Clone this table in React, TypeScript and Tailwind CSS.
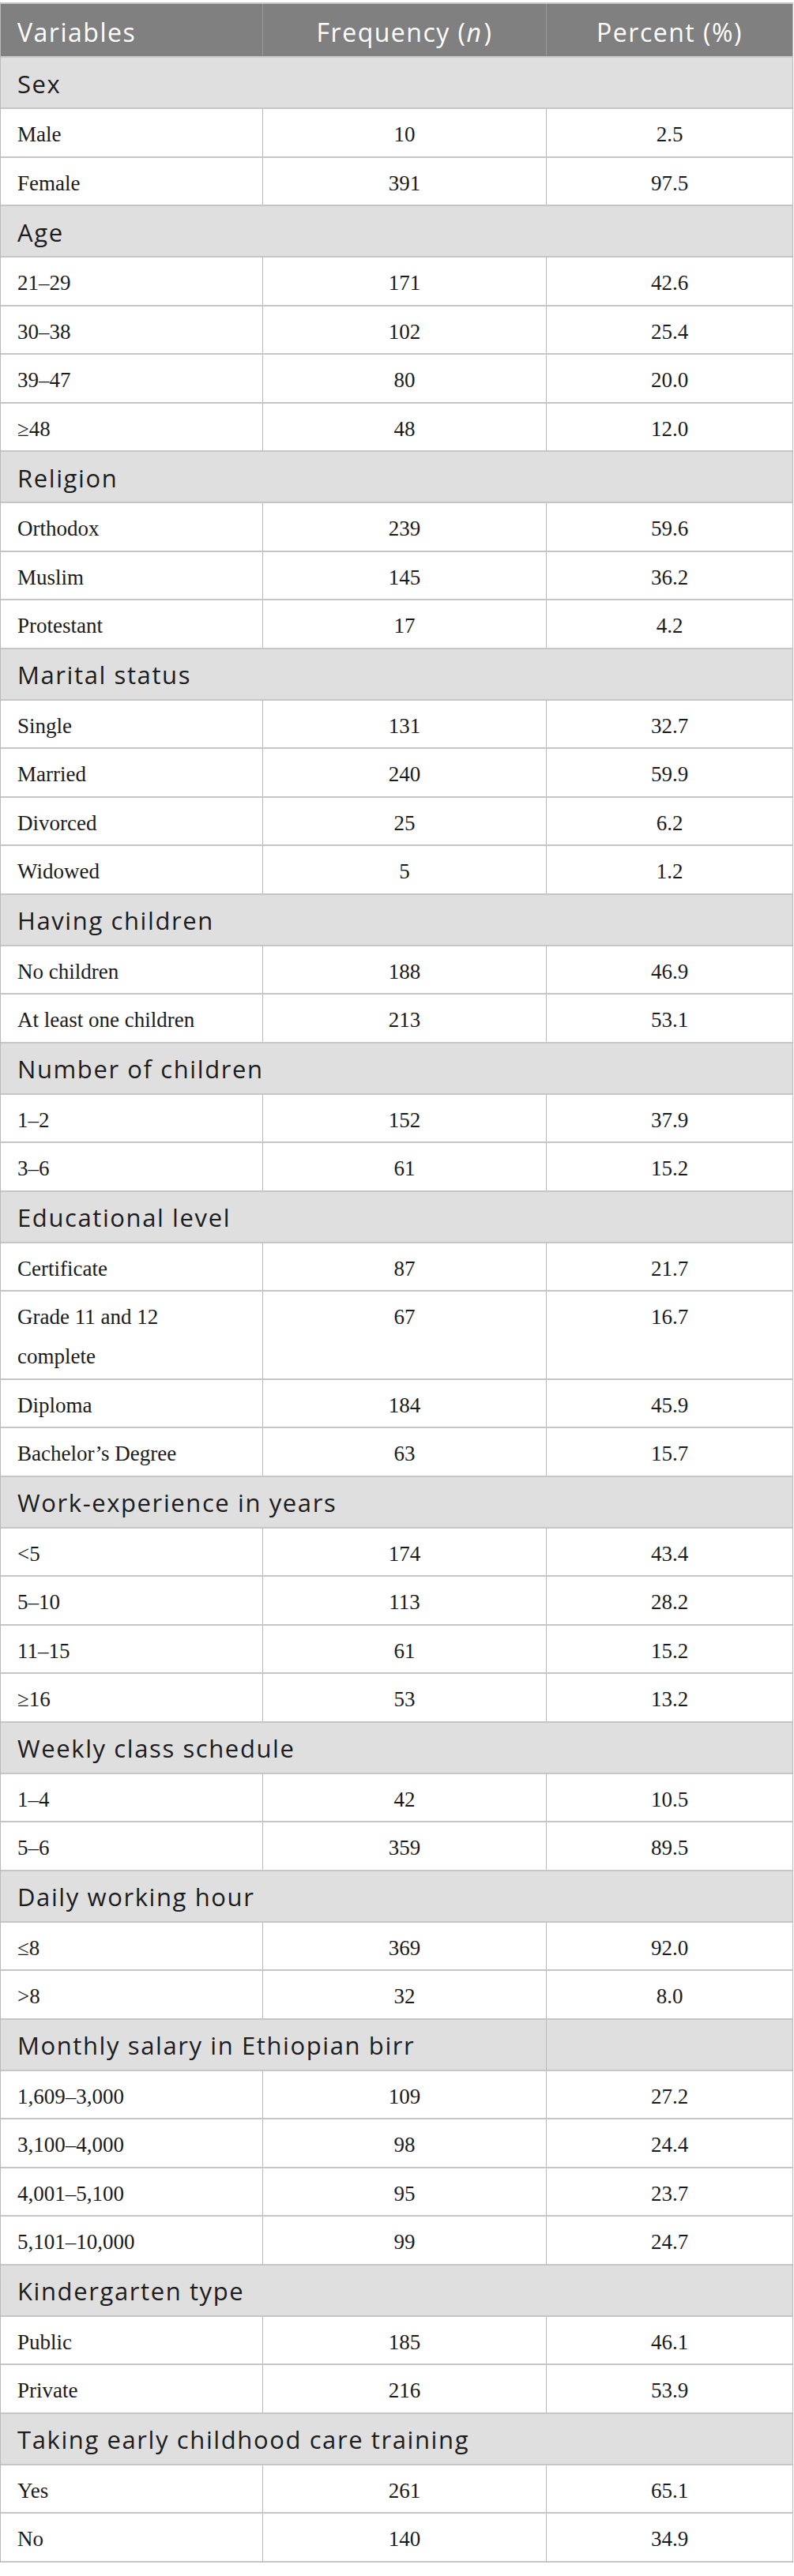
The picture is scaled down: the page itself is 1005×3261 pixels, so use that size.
import React from "react";

type Group = {
  title: string;
  splitLast?: boolean;
  rows: [string, string, string][];
};

const groups: Group[] = [
  { title: "Sex", rows: [["Male", "10", "2.5"], ["Female", "391", "97.5"]] },
  {
    title: "Age",
    rows: [
      ["21–29", "171", "42.6"],
      ["30–38", "102", "25.4"],
      ["39–47", "80", "20.0"],
      ["≥48", "48", "12.0"],
    ],
  },
  {
    title: "Religion",
    rows: [
      ["Orthodox", "239", "59.6"],
      ["Muslim", "145", "36.2"],
      ["Protestant", "17", "4.2"],
    ],
  },
  {
    title: "Marital status",
    rows: [
      ["Single", "131", "32.7"],
      ["Married", "240", "59.9"],
      ["Divorced", "25", "6.2"],
      ["Widowed", "5", "1.2"],
    ],
  },
  {
    title: "Having children",
    rows: [
      ["No children", "188", "46.9"],
      ["At least one children", "213", "53.1"],
    ],
  },
  {
    title: "Number of children",
    rows: [
      ["1–2", "152", "37.9"],
      ["3–6", "61", "15.2"],
    ],
  },
  {
    title: "Educational level",
    rows: [
      ["Certificate", "87", "21.7"],
      ["Grade 11 and 12 complete", "67", "16.7"],
      ["Diploma", "184", "45.9"],
      ["Bachelor’s Degree", "63", "15.7"],
    ],
  },
  {
    title: "Work-experience in years",
    rows: [
      ["<5", "174", "43.4"],
      ["5–10", "113", "28.2"],
      ["11–15", "61", "15.2"],
      ["≥16", "53", "13.2"],
    ],
  },
  {
    title: "Weekly class schedule",
    rows: [
      ["1–4", "42", "10.5"],
      ["5–6", "359", "89.5"],
    ],
  },
  {
    title: "Daily working hour",
    rows: [
      ["≤8", "369", "92.0"],
      [">8", "32", "8.0"],
    ],
  },
  {
    title: "Monthly salary in Ethiopian birr",
    splitLast: true,
    rows: [
      ["1,609–3,000", "109", "27.2"],
      ["3,100–4,000", "98", "24.4"],
      ["4,001–5,100", "95", "23.7"],
      ["5,101–10,000", "99", "24.7"],
    ],
  },
  {
    title: "Kindergarten type",
    rows: [
      ["Public", "185", "46.1"],
      ["Private", "216", "53.9"],
    ],
  },
  {
    title: "Taking early childhood care training",
    rows: [
      ["Yes", "261", "65.1"],
      ["No", "140", "34.9"],
    ],
  },
];

const sans = "font-['Open_Sans',sans-serif]";
const serif = "font-['Liberation_Serif',serif]";

function GroupRow({ g }: { g: Group }) {
  return (
    <div className="flex h-[65px] border-b-2 border-[#c6c6c6] bg-[#e0dfe0] text-[#1c1c1c]">
      <div
        className={`${sans} flex items-center pt-[3px] pl-[21px] text-[31px] tracking-[1.6px] ${
          g.splitLast ? "w-[691px] border-r border-[#b9b9b9]" : "flex-1"
        }`}
      >
        {g.title}
      </div>
      {g.splitLast && <div className="flex-1" />}
    </div>
  );
}

function DataRow({ row }: { row: [string, string, string] }) {
  const [label, n, pct] = row;
  return (
    <div className={`${serif} flex border-b-2 border-[#c6c6c6] text-[27px] leading-[50px] text-[#1a1a1a]`}>
      <div className="w-[332px] border-r border-[#b9b9b9] pt-[7px] pb-[2.5px] pl-[21px] pr-[40px]">
        {label}
      </div>
      <div className="w-[359px] border-r border-[#b9b9b9] pt-[7px] pb-[2.5px] text-center">{n}</div>
      <div className="flex-1 pt-[7px] pb-[2.5px] text-center">{pct}</div>
    </div>
  );
}

export default function App() {
  return (
    <div className="min-h-[3261px] bg-white pt-[3px]">
      <div className="w-[1004px] border-x border-t-2 border-[#c6c6c6] border-x-[#b9b9b9]">
        <div
          className={`${sans} flex h-[68px] border-b-2 border-[#c6c6c6] bg-[#808080] text-[32px] tracking-[1.5px] text-white`}
        >
          <div className="flex w-[332px] items-center border-r border-[#9a9a9a] pt-[5px] pl-[21px]">
            Variables
          </div>
          <div className="flex w-[359px] items-center justify-center border-r border-[#9a9a9a] pt-[5px]">
            Frequency (<i className="pr-[2px]">n</i>)
          </div>
          <div className="flex flex-1 items-center justify-center pt-[5px]">Percent (%)</div>
        </div>
        {groups.map((g) => (
          <React.Fragment key={g.title}>
            <GroupRow g={g} />
            {g.rows.map((r) => (
              <DataRow key={r[0]} row={r} />
            ))}
          </React.Fragment>
        ))}
      </div>
    </div>
  );
}
